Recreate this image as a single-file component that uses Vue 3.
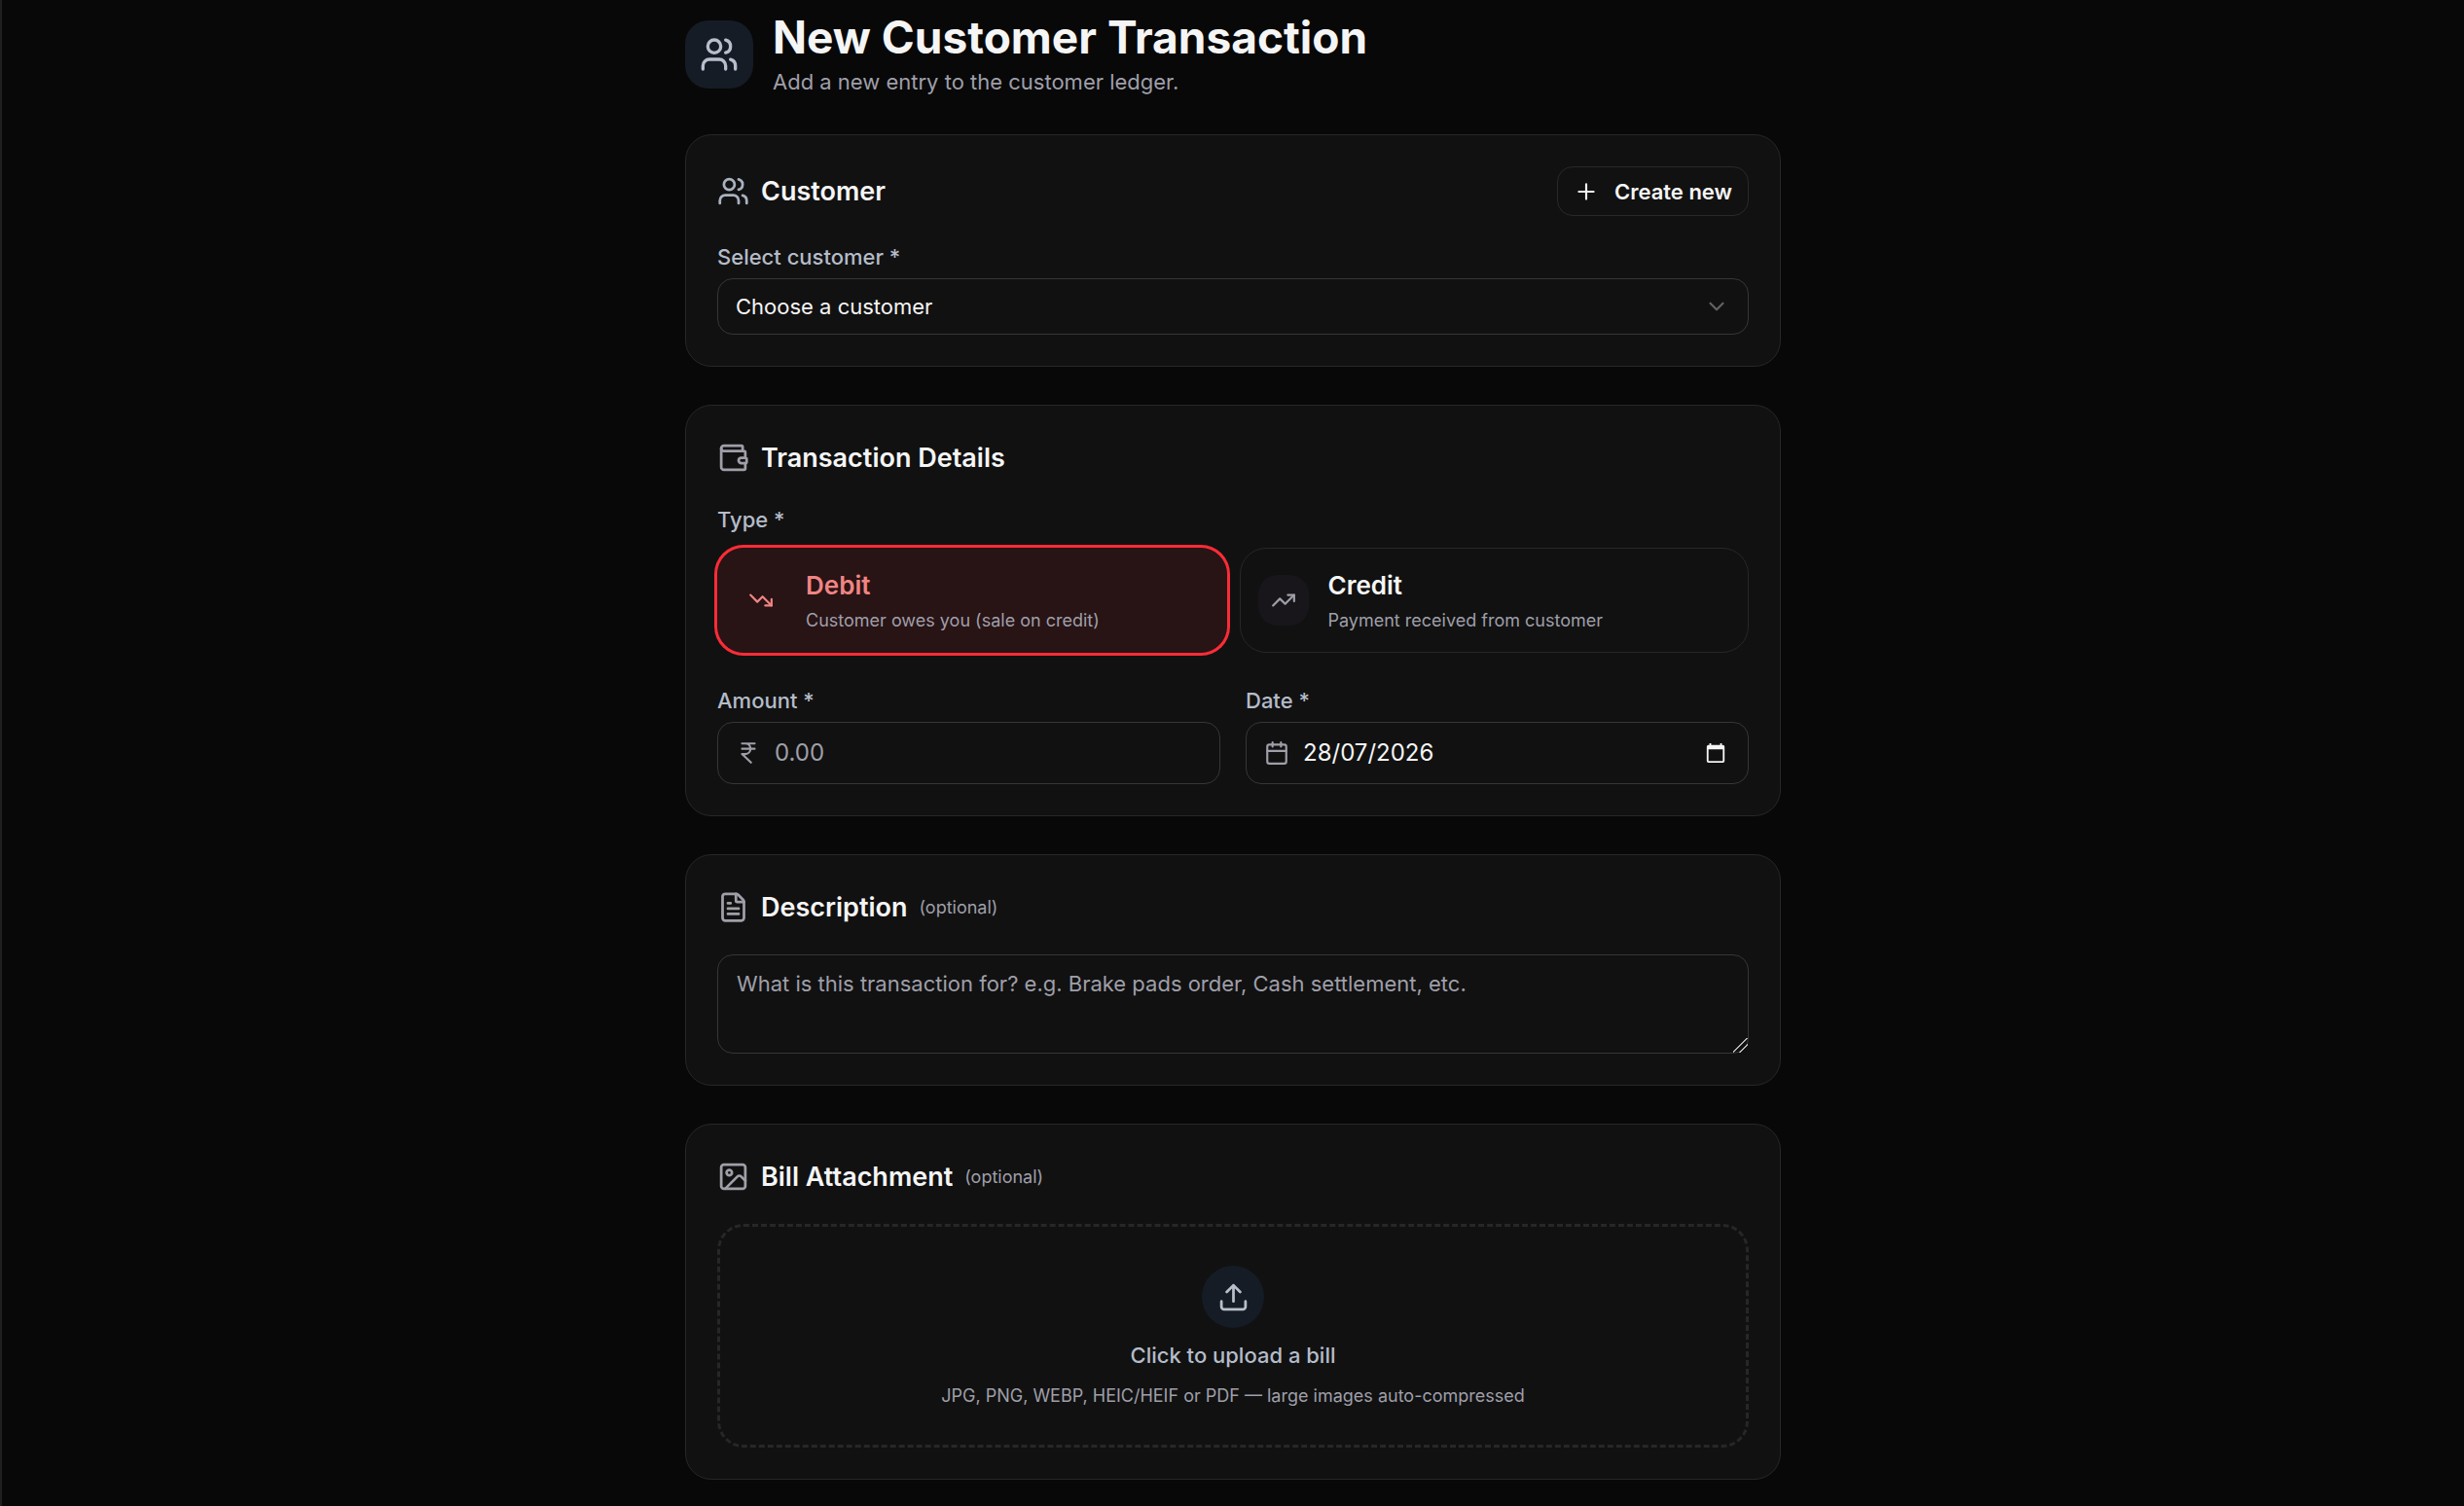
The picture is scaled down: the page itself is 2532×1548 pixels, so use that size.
<script setup>
import { ref } from 'vue'

const customer = ref('')
const kind = ref('debit')
const amount = ref('')
const date = ref('28/07/2026')
const description = ref('')
</script>

<template>
  <main class="page">
    <form class="column" @submit.prevent>
      <header class="masthead">
        <div class="masthead-icon">
          <svg class="icon-xl" viewBox="0 0 24 24" aria-hidden="true">
            <path d="M16 21v-2a4 4 0 0 0-4-4H6a4 4 0 0 0-4 4v2" />
            <path d="M16 3.128a4 4 0 0 1 0 7.744" />
            <path d="M22 21v-2a4 4 0 0 0-3-3.87" />
            <circle cx="9" cy="7" r="4" />
          </svg>
        </div>
        <div>
          <h1>New Customer Transaction</h1>
          <p class="subtitle">Add a new entry to the customer ledger.</p>
        </div>
      </header>

      <div class="cards">
        <section class="card">
          <div class="card-head">
            <svg class="icon-lg cool" viewBox="0 0 24 24" aria-hidden="true">
              <path d="M16 21v-2a4 4 0 0 0-4-4H6a4 4 0 0 0-4 4v2" />
              <path d="M16 3.128a4 4 0 0 1 0 7.744" />
              <path d="M22 21v-2a4 4 0 0 0-3-3.87" />
              <circle cx="9" cy="7" r="4" />
            </svg>
            <h2>Customer</h2>
            <button type="button" class="create">
              <svg class="icon-md" viewBox="0 0 24 24" aria-hidden="true"><path d="M5 12h14M12 5v14" /></svg>
              Create new
            </button>
          </div>
          <div class="field">
            <label for="customer">Select customer *</label>
            <div class="control">
              <select id="customer" v-model="customer">
                <option value="">Choose a customer</option>
              </select>
              <svg class="icon-md chevron" viewBox="0 0 24 24" aria-hidden="true"><path d="m6 9 6 6 6-6" /></svg>
            </div>
          </div>
        </section>

        <section class="card">
          <div class="card-head">
            <svg class="icon-lg" viewBox="0 0 24 24" aria-hidden="true">
              <path d="M19 7V4a1 1 0 0 0-1-1H5a2 2 0 0 0 0 4h15a1 1 0 0 1 1 1v4h-3a2 2 0 0 0 0 4h3a1 1 0 0 0 1-1v-2a1 1 0 0 0-1-1" />
              <path d="M3 5v14a2 2 0 0 0 2 2h15a1 1 0 0 0 1-1v-4" />
            </svg>
            <h2>Transaction Details</h2>
          </div>
          <div class="type" role="group" aria-labelledby="type-label">
            <span id="type-label" class="label">Type *</span>
            <div class="choices">
              <button type="button" class="choice" :class="{ debit: kind === 'debit' }" :aria-pressed="kind === 'debit'" @click="kind = 'debit'">
                <span class="choice-icon">
                  <svg class="icon-md" viewBox="0 0 24 24" aria-hidden="true"><path d="M16 17h6v-6" /><path d="m22 17-8.500-8.500-5 5L2 7" /></svg>
                </span>
                <span class="choice-text">
                  <span class="choice-name">Debit</span>
                  <span class="choice-note">Customer owes you (sale on credit)</span>
                </span>
              </button>
              <button type="button" class="choice" :class="{ credit: kind === 'credit' }" :aria-pressed="kind === 'credit'" @click="kind = 'credit'">
                <span class="choice-icon">
                  <svg class="icon-md" viewBox="0 0 24 24" aria-hidden="true"><path d="M16 7h6v6" /><path d="m22 7-8.500 8.500-5-5L2 17" /></svg>
                </span>
                <span class="choice-text">
                  <span class="choice-name">Credit</span>
                  <span class="choice-note">Payment received from customer</span>
                </span>
              </button>
            </div>
          </div>
          <div class="pair">
            <div class="field">
              <label for="amount">Amount *</label>
              <div class="control box">
                <svg class="icon-md" viewBox="0 0 24 24" aria-hidden="true">
                  <path d="M6 3h12M6 8h12M6 13l8.500 8M6 13h3M9 13c6.667 0 6.667-10 0-10" />
                </svg>
                <input id="amount" v-model="amount" type="text" inputmode="decimal" placeholder="0.00" />
              </div>
            </div>
            <div class="field">
              <label for="date">Date *</label>
              <div class="control box">
                <svg class="icon-md" viewBox="0 0 24 24" aria-hidden="true">
                  <path d="M8 2v4M16 2v4M3 10h18" /><rect x="3" y="4" width="18" height="18" rx="2" />
                </svg>
                <input id="date" v-model="date" type="text" />
                <button type="button" class="picker" aria-label="Open calendar">
                  <svg viewBox="0 0 24 24" aria-hidden="true">
                    <path fill-rule="evenodd" d="M20 3h-1V1h-2v2H7V1H5v2H4a2 2 0 0 0-2 2v16a2 2 0 0 0 2 2h16a2 2 0 0 0 2-2V5a2 2 0 0 0-2-2zm0 18H4V8h16z" />
                  </svg>
                </button>
              </div>
            </div>
          </div>
        </section>

        <section class="card">
          <div class="card-head">
            <svg class="icon-lg" viewBox="0 0 24 24" aria-hidden="true">
              <path d="M6 22a2 2 0 0 1-2-2V4a2 2 0 0 1 2-2h8a2.400 2.400 0 0 1 1.704.706l3.588 3.588A2.400 2.400 0 0 1 20 8v12a2 2 0 0 1-2 2z" />
              <path d="M14 2v5a1 1 0 0 0 1 1h5M10 9H8M16 13H8M16 17H8" />
            </svg>
            <h2 id="description-title">Description</h2>
            <span class="optional">(optional)</span>
          </div>
          <textarea v-model="description" aria-labelledby="description-title" placeholder="What is this transaction for? e.g. Brake pads order, Cash settlement, etc."></textarea>
        </section>

        <section class="card">
          <div class="card-head">
            <svg class="icon-lg" viewBox="0 0 24 24" aria-hidden="true">
              <rect x="3" y="3" width="18" height="18" rx="2" /><circle cx="9" cy="9" r="2" />
              <path d="m21 15-3.086-3.086a2 2 0 0 0-2.828 0L6 21" />
            </svg>
            <h2>Bill Attachment</h2>
            <span class="optional">(optional)</span>
          </div>
          <label class="dropzone">
            <input type="file" class="file" accept="image/*,application/pdf" />
            <span class="upload-icon">
              <svg class="icon-lg" viewBox="0 0 24 24" aria-hidden="true">
                <path d="M12 3v12M17 8l-5-5-5 5M21 15v4a2 2 0 0 1-2 2H5a2 2 0 0 1-2-2v-4" />
              </svg>
            </span>
            <span class="upload-title">Click to upload a bill</span>
            <span class="upload-note">JPG, PNG, WEBP, HEIC/HEIF or PDF — large images auto-compressed</span>
          </label>
        </section>
      </div>
    </form>
  </main>
</template>

<style>
body {
  background: #080808;
}
</style>

<style scoped>
* {
  box-sizing: border-box;
}

.page {
  min-height: 100vh;
  padding: 10px 24px 28px;
  border-left: 2px solid #202020;
  background: #080808;
  color: #f5f5f5;
  font-family: Inter, "Liberation Sans", sans-serif;
  font-size: 22px;
  line-height: 30px;
}

.column {
  display: flex;
  flex-direction: column;
  gap: 37px;
  max-width: 1126px;
  margin: 0 auto;
}

.cards {
  display: flex;
  flex-direction: column;
  gap: 39px;
}

svg {
  flex: none;
  display: block;
  fill: none;
  stroke: currentColor;
  stroke-width: 2;
  stroke-linecap: round;
  stroke-linejoin: round;
}

.icon-xl {
  width: 40px;
  height: 40px;
}

.icon-lg {
  width: 33px;
  height: 33px;
}

.icon-md {
  width: 26px;
  height: 26px;
}

.masthead {
  display: flex;
  align-items: center;
  gap: 20px;
}

.masthead-icon {
  display: grid;
  place-items: center;
  width: 70px;
  height: 70px;
  border-radius: 24px;
  background: #151c26;
  color: #b8bfcc;
}

h1,
h2,
p {
  margin: 0;
}

h1 {
  font-size: 46px;
  font-weight: 700;
  line-height: 57px;
}

.subtitle {
  color: #9f9fa9;
  line-height: 34px;
}

.card {
  display: flex;
  flex-direction: column;
  gap: 27px;
  padding: 32px;
  border: 1px solid #272729;
  border-radius: 27px;
  background: #111111;
}

.card-head {
  display: flex;
  align-items: center;
  gap: 12px;
  min-height: 43px;
  color: #9f9fa9;
}

.cool {
  color: #a9b2bf;
}

h2 {
  color: #f5f5f5;
  font-size: 27px;
  font-weight: 600;
  line-height: 40px;
}

.create {
  display: flex;
  align-items: center;
  gap: 16px;
  height: 51px;
  margin-left: auto;
  padding: 0 16px;
  border: 1px solid #27292e;
  border-radius: 16px;
  background: transparent;
  color: #f5f5f5;
  font: inherit;
  font-weight: 600;
}

.field {
  display: flex;
  flex-direction: column;
  gap: 7px;
}

.field label,
.label {
  color: #b4bcc9;
  font-weight: 500;
}

.control {
  position: relative;
}

select {
  display: block;
  width: 100%;
  height: 58px;
  padding: 0 56px 0 18px;
  border: 1px solid #363638;
  border-radius: 16px;
  background: transparent;
  color: #f5f5f5;
  font: inherit;
  appearance: none;
}

.chevron {
  position: absolute;
  top: 16px;
  right: 20px;
  color: #626265;
  pointer-events: none;
}

.type {
  display: flex;
  flex-direction: column;
  gap: 14px;
}

.choices {
  display: grid;
  grid-template-columns: 1fr 1fr;
  gap: 13px;
}

.choice {
  display: flex;
  align-items: center;
  gap: 20px;
  padding: 18px;
  border: 1px solid #27272a;
  border-radius: 27px;
  background: transparent;
  color: #f5f5f5;
  font: inherit;
  text-align: left;
}

.choice-icon {
  display: grid;
  place-items: center;
  width: 52px;
  height: 52px;
  border-radius: 20px;
  background: #18161b;
  color: #9f9fa9;
}

.choice-text {
  display: flex;
  flex-direction: column;
  gap: 2px;
}

.choice-name {
  font-size: 26px;
  font-weight: 600;
  line-height: 40px;
}

.choice-note {
  color: #9f9fa9;
  font-size: 18px;
  line-height: 28px;
}

.choice.debit {
  border-color: #281315;
  background: #281315;
  box-shadow: 0 0 0 3px #fb2c36;
}

.choice.debit .choice-icon {
  background: transparent;
  color: #f08583;
}

.choice.debit .choice-name {
  color: #f08583;
}

.choice.credit {
  border-color: #10251a;
  background: #10251a;
  box-shadow: 0 0 0 3px #00c950;
}

.pair {
  display: grid;
  grid-template-columns: 1fr 1fr;
  gap: 26px;
  margin-top: 7px;
}

.box {
  display: flex;
  align-items: center;
  gap: 14px;
  height: 64px;
  padding: 0 18px;
  border: 1px solid #363638;
  border-radius: 16px;
  color: #9f9fa9;
}

.box input {
  flex: 1;
  min-width: 0;
  padding: 0;
  border: 0;
  outline: 0;
  background: transparent;
  color: #f5f5f5;
  font: inherit;
  font-size: 24px;
}

.picker {
  display: grid;
  place-items: center;
  width: 30px;
  height: 30px;
  padding: 0;
  border: 0;
  background: transparent;
  color: #f5f5f5;
}

.picker svg {
  width: 22px;
  height: 22px;
  fill: currentColor;
  stroke: none;
}

input::placeholder,
textarea::placeholder {
  color: #9f9fa9;
  opacity: 1;
}

.optional {
  font-size: 18px;
}

textarea {
  display: block;
  width: 100%;
  height: 102px;
  padding: 12px 19px;
  border: 1px solid #363638;
  border-radius: 16px;
  background: transparent;
  color: #f5f5f5;
  color-scheme: dark;
  font: inherit;
  line-height: 34px;
  resize: vertical;
}

textarea::-webkit-resizer {
  background: linear-gradient(135deg, transparent 44%, #b4b4b8 45% 50%, transparent 51% 69%, #b4b4b8 70% 75%, transparent 76%);
}

.dropzone {
  position: relative;
  display: flex;
  flex-direction: column;
  align-items: center;
  gap: 10px;
  padding: 40px 38px 36px;
  border: 3px dashed #27272a;
  border-radius: 27px;
}

.file {
  position: absolute;
  inset: 0;
  opacity: 0;
}

.upload-icon {
  display: grid;
  place-items: center;
  width: 64px;
  height: 64px;
  border-radius: 50%;
  background: #151c26;
  color: #b8bfcc;
}

.upload-title {
  color: #b4bcc9;
  font-weight: 500;
  line-height: 36px;
}

.upload-note {
  color: #9f9fa9;
  font-size: 18px;
  line-height: 28px;
}
</style>
